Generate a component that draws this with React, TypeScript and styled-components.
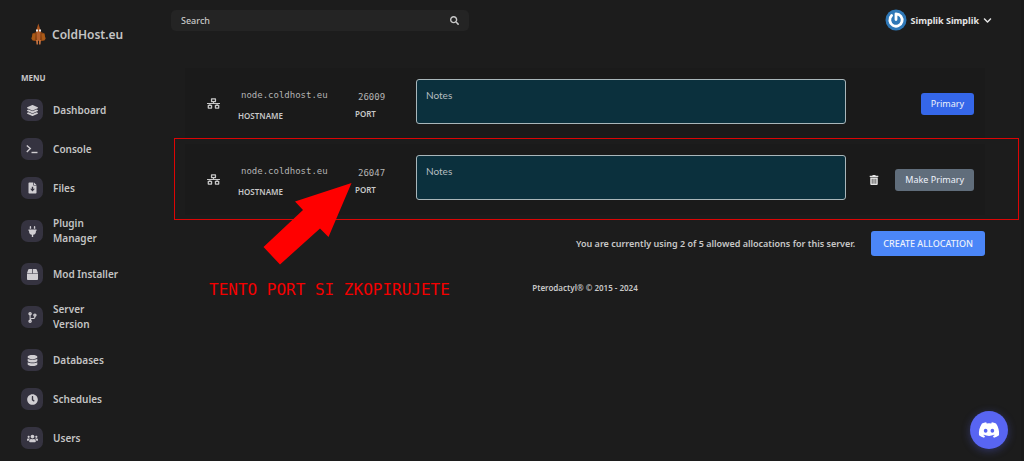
import React from "react";
import styled, { createGlobalStyle } from "styled-components";
import type { IconType } from "react-icons";
import {
  FaBox,
  FaChevronDown,
  FaClock,
  FaCodeBranch,
  FaDatabase,
  FaDiscord,
  FaLayerGroup,
  FaNetworkWired,
  FaPlug,
  FaSearch,
  FaTrashAlt,
  FaUsers,
} from "react-icons/fa";

const sans = '"Noto Sans", "Open Sans", sans-serif';
const mono = '"DejaVu Sans Mono", monospace';

const GlobalStyle = createGlobalStyle`
  *, *::before, *::after { box-sizing: border-box; }
  body {
    margin: 0;
    background: #1c1c1c;
    color: #c8c8c8;
    font-family: ${sans};
    font-size: 10px;
  }
  button, input, textarea { font: inherit; color: inherit; margin: 0; }
  button { border: 0; cursor: pointer; }
`;

const Page = styled.div`
  display: flex;
  min-height: 100vh;
  border-right: 3px solid #191919;
`;

const Sidebar = styled.aside`
  flex: 0 0 170px;
  padding: 22px 40px 12px 21px;
`;

const Brand = styled.a`
  display: flex;
  align-items: center;
  gap: 6px;
  height: 24px;
  padding-left: 10px;
  color: #c4c4c4;
  font-size: 12px;
  font-weight: 600;
  text-decoration: none;
`;

const MenuTitle = styled.h2`
  margin: 26px 0 15px;
  font-size: 8px;
  line-height: 12px;
  font-weight: 700;
`;

const MenuList = styled.ul`
  display: flex;
  flex-direction: column;
  gap: 17px;
  margin: 0;
  padding: 0 10px 0 0;
  list-style: none;
`;

const MenuLink = styled.a`
  display: flex;
  align-items: center;
  gap: 10px;
  color: #c4c4c4;
  font-weight: 600;
  line-height: 15px;
  text-decoration: none;
`;

const MenuIcon = styled.span`
  display: grid;
  place-items: center;
  flex: 0 0 22px;
  height: 22px;
  border-radius: 7px;
  background: #353340;
  color: #d0ced2;
  font-size: 11px;
`;

const Main = styled.main`
  flex: 1;
  min-width: 0;
`;

const TopBar = styled.header`
  display: flex;
  align-items: center;
  justify-content: space-between;
  height: 40px;
  padding: 0 29px 0 1px;
`;

const SearchBox = styled.label`
  display: flex;
  align-items: center;
  width: 298px;
  height: 21px;
  padding: 0 10px;
  border-radius: 5px;
  background: #242424;
  font-size: 9px;
`;

const SearchInput = styled.input`
  flex: 1;
  min-width: 0;
  padding: 0;
  border: 0;
  outline: 0;
  background: transparent;
  font-size: 9px;
  font-weight: 500;
  &::placeholder { color: #c8c8c8; opacity: 1; }
`;

const Account = styled.button`
  display: flex;
  align-items: center;
  gap: 4px;
  padding: 0;
  background: transparent;
  color: #e4e4e4;
  font-size: 9px;
  font-weight: 700;
`;

const Chevron = styled(FaChevronDown)`
  font-size: 9px;
`;

const Content = styled.div`
  display: flex;
  flex-direction: column;
  gap: 5px;
  padding: 28px 36px 0 15px;
`;

const Row = styled.section`
  position: relative;
  display: flex;
  align-items: flex-start;
  height: 71px;
  padding: 11px 11px 0 22px;
  background: #1a1a1a;
`;

const NetworkIcon = styled(FaNetworkWired)`
  flex: none;
  width: 13px;
  height: 11px;
  margin: 19px 18px 0 0;
`;

const Field = styled.div<{ $width: number; $tight?: boolean }>`
  display: flex;
  flex-direction: column;
  gap: ${(p) => (p.$tight ? 5 : 9)}px;
  flex: 0 0 ${(p) => p.$width}px;
  padding-top: ${(p) => (p.$tight ? 12 : 10)}px;
`;

const Code = styled.code`
  padding-left: 3px;
  color: #b4b4b4;
  font-family: ${mono};
  font-size: 9px;
  line-height: 12px;
`;

const FieldLabel = styled.span`
  font-size: 8px;
  line-height: 12px;
  font-weight: 600;
`;

const Notes = styled.textarea`
  flex: 1;
  min-width: 0;
  height: 45px;
  padding: 8px 9px;
  border: 1px solid #a9b6ba;
  border-radius: 3px;
  outline: 0;
  background: #0b303d;
  font-family: Lato, sans-serif;
  font-size: 10px;
  line-height: 14px;
  resize: none;
  &::placeholder { color: #b6bec0; opacity: 1; }
`;

const Actions = styled.div`
  display: flex;
  align-items: center;
  justify-content: flex-end;
  gap: 16px;
  flex: 0 0 128px;
  height: 49px;
`;

const IconButton = styled.button`
  display: flex;
  padding: 0;
  background: transparent;
  color: #e4e4e4;
  font-size: 10px;
`;

const Button = styled.button<{ $tone: "primary" | "muted" | "create" }>`
  height: ${(p) => (p.$tone === "create" ? 25 : 22)}px;
  padding: 0 ${(p) => (p.$tone === "create" ? 12 : 10)}px;
  border-radius: 3px;
  background: ${(p) => ({ primary: "#3567e9", muted: "#606d7b", create: "#4b86f8" })[p.$tone]};
  color: #eef2fb;
  font-size: 9px;
  font-weight: ${(p) => (p.$tone === "create" ? 500 : 400)};
  white-space: nowrap;
`;

const Summary = styled.div`
  display: flex;
  align-items: center;
  justify-content: flex-end;
  gap: 16px;
  margin-top: 11px;
  font-size: 9px;
  font-weight: 600;
`;

const Footer = styled.footer`
  margin-top: 21px;
  text-align: center;
  font-size: 8px;
  line-height: 12px;
  font-weight: 600;
`;

const Highlight = styled.div`
  position: absolute;
  inset: -6px -34px -5px -11px;
  border: 1px solid #dc0505;
  pointer-events: none;
`;

const Arrow = styled.svg`
  position: absolute;
  top: 39px;
  left: 78px;
  width: 90px;
  height: 84px;
  pointer-events: none;
`;

const Caption = styled.p`
  position: absolute;
  top: 136px;
  left: 24px;
  margin: 0;
  color: #f40000;
  font-family: ${mono};
  font-size: 16px;
  line-height: 20px;
  white-space: nowrap;
  pointer-events: none;
`;

const DiscordButton = styled.a`
  position: fixed;
  right: 16px;
  bottom: 12px;
  display: grid;
  place-items: center;
  width: 38px;
  height: 38px;
  border-radius: 50%;
  background: #5865f2;
  box-shadow: 0 2px 8px rgba(88, 101, 242, 0.35);
  color: #ffffff;
  font-size: 22px;
`;

function Prompt() {
  return (
    <svg width="12" height="10" viewBox="0 0 12 10" fill="none" stroke="currentColor" strokeWidth="1.4" aria-hidden="true">
      <path d="M.8 1.400 4.300 4.600.8 8" />
      <path d="M5.500 8.500h6" />
    </svg>
  );
}

function FileDown() {
  return (
    <svg width="9" height="12" viewBox="0 0 9 12" aria-hidden="true">
      <path d="M1.300.5h4v3h3.200v7.200a.8.8 0 0 1-.8.8H1.300a.8.8 0 0 1-.8-.8V1.300A.8.8 0 0 1 1.300.5Z" fill="currentColor" />
      <path d="M6 .5 8.500 2.900H6Z" fill="currentColor" />
      <path d="M3.800 4.800h1.400v1.900h1.700L4.500 9.600 2.100 6.700h1.700Z" fill="#353340" />
    </svg>
  );
}

const menu: { label: string; icon: IconType | React.ComponentType }[] = [
  { label: "Dashboard", icon: FaLayerGroup },
  { label: "Console", icon: Prompt },
  { label: "Files", icon: FileDown },
  { label: "Plugin Manager", icon: FaPlug },
  { label: "Mod Installer", icon: FaBox },
  { label: "Server Version", icon: FaCodeBranch },
  { label: "Databases", icon: FaDatabase },
  { label: "Schedules", icon: FaClock },
  { label: "Users", icon: FaUsers },
];

function Wizard() {
  return (
    <svg width="15" height="22" viewBox="0 0 15 22" aria-hidden="true">
      <path d="M7.300.5 8.800 5 10 9H5L6 5Z" fill="#a9541e" />
      <path d="M1.500 10.500 5.500 9h4.500l3.500 1.500L14.500 16l-1 1.500-2.500.5H4l-2.500-.5L.5 16Z" fill="#8a4312" />
      <path d="M.5 15.500 1.800 10.500 4.500 11 3.800 17.500 1.500 17ZM14.500 15.500l-1.300-5-2.700.5.7 6.500 2.300-.5Z" fill="#a85a18" />
      <path d="M5.500 9h4L9 17.500H6Z" fill="#b5602c" />
      <path d="M5 17h2v4.500H5.500ZM8 17h2l-.5 4.500H8Z" fill="#c07040" />
      <path d="M5 6.500h2v2H5ZM8 6.500h2v2H8Z" fill="#eeeeee" />
    </svg>
  );
}

function Avatar() {
  return (
    <svg width="22" height="22" viewBox="0 0 22 22" aria-hidden="true">
      <circle cx="11" cy="11" r="10.500" fill="#2f78b7" />
      <path
        d="M11 10.500V4.800a6.200 6.200 0 1 1-4.400 1.800"
        fill="none"
        stroke="#fff"
        strokeWidth="2.800"
        strokeLinecap="round"
        strokeLinejoin="round"
      />
    </svg>
  );
}

function Allocation({ port, primary, children }: { port: string; primary?: boolean; children?: React.ReactNode }) {
  return (
    <Row>
      <NetworkIcon />
      <Field $width={117}>
        <Code>node.coldhost.eu</Code>
        <FieldLabel>HOSTNAME</FieldLabel>
      </Field>
      <Field $width={61} $tight>
        <Code>{port}</Code>
        <FieldLabel>PORT</FieldLabel>
      </Field>
      <Notes placeholder="Notes" aria-label={`Notes for port ${port}`} />
      <Actions>
        {!primary && (
          <IconButton aria-label="Delete allocation">
            <FaTrashAlt />
          </IconButton>
        )}
        <Button $tone={primary ? "primary" : "muted"}>{primary ? "Primary" : "Make Primary"}</Button>
      </Actions>
      {children}
    </Row>
  );
}

export default function App() {
  return (
    <>
      <GlobalStyle />
      <Page>
        <Sidebar>
          <Brand href="#">
            <Wizard />
            ColdHost.eu
          </Brand>
          <MenuTitle>MENU</MenuTitle>
          <nav>
            <MenuList>
              {menu.map(({ label, icon: Icon }) => (
                <li key={label}>
                  <MenuLink href="#">
                    <MenuIcon>
                      <Icon />
                    </MenuIcon>
                    <span>{label}</span>
                  </MenuLink>
                </li>
              ))}
            </MenuList>
          </nav>
        </Sidebar>
        <Main>
          <TopBar>
            <SearchBox>
              <SearchInput type="text" placeholder="Search" aria-label="Search" />
              <FaSearch />
            </SearchBox>
            <Account>
              <Avatar />
              Simplik Simplik
              <Chevron />
            </Account>
          </TopBar>
          <Content>
            <Allocation port="26009" primary />
            <Allocation port="26047">
              <Highlight />
              <Arrow viewBox="0 0 90 84" aria-hidden="true">
                <path d="M88.500 0 32 18.500 40 27 .5 64 17 81.500 57 45.500 65.500 54Z" fill="#ff0000" />
              </Arrow>
              <Caption>TENTO PORT SI ZKOPIRUJETE</Caption>
            </Allocation>
            <Summary>
              <span>You are currently using 2 of 5 allowed allocations for this server.</span>
              <Button $tone="create">CREATE ALLOCATION</Button>
            </Summary>
            <Footer>Pterodactyl® © 2015 - 2024</Footer>
          </Content>
        </Main>
      </Page>
      <DiscordButton href="#" aria-label="Discord">
        <FaDiscord />
      </DiscordButton>
    </>
  );
}
